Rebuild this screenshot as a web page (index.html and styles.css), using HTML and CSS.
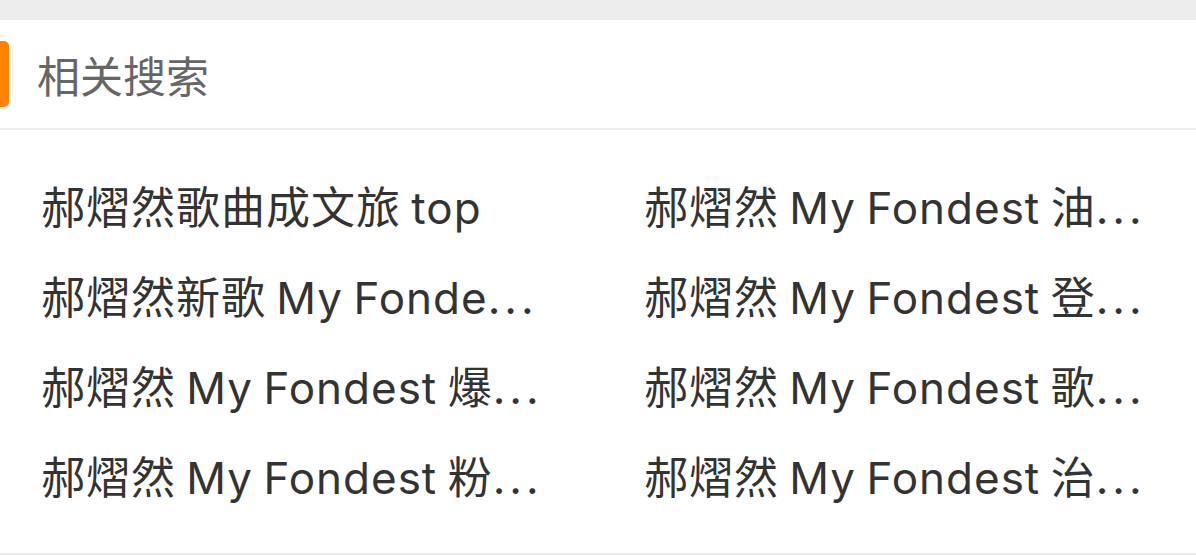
FILE: index.html
```html
<!DOCTYPE html>
<html lang="zh-CN">
<head>
  <meta charset="UTF-8">
  <meta name="viewport" content="width=device-width, initial-scale=1">
  <title>相关搜索</title>
  <link rel="stylesheet" href="styles.css">
</head>
<body>

<!-- 相关搜索 -->
<div class="card">
  <div class="card-head">
    <span class="mark"></span>
    <h2>相关搜索</h2>
  </div>

  <ul class="related">
    <li><a href="#">郝熠然歌曲成文旅 top</a></li>
    <li><a href="#">郝熠然 My Fondest 油<span class="more">...</span></a></li>
    <li><a href="#">郝熠然新歌 My Fonde<span class="more">...</span></a></li>
    <li><a href="#">郝熠然 My Fondest 登<span class="more">...</span></a></li>
    <li><a href="#">郝熠然 My Fondest 爆<span class="more">...</span></a></li>
    <li><a href="#">郝熠然 My Fondest 歌<span class="more">...</span></a></li>
    <li><a href="#">郝熠然 My Fondest 粉<span class="more">...</span></a></li>
    <li><a href="#">郝熠然 My Fondest 治<span class="more">...</span></a></li>
  </ul>
</div>

</body>
</html>
```

FILE: styles.css
```css
body {
  margin: 0;
  padding: 20px 0 6px;
  background-color: #ededed;
  font-family: Inter, "Noto Sans CJK SC", sans-serif;
  color: #333;
}

.card {
  background-color: #fff;
}

.card-head {
  display: flex;
  align-items: center;
  height: 108px;
  border-bottom: 2px solid #ececec;
}

.mark {
  width: 9px;
  height: 66px;
  background-color: #ff8200;
  border-radius: 0 5px 5px 0;
}

.card-head h2 {
  margin: 0 0 0 28px;
  font-size: 43px;
  font-weight: normal;
  color: #666;
}

/* 两列关键词 */
.related {
  list-style: none;
  margin: 0;
  padding: 30px 0 33px 41px;
  display: grid;
  grid-template-columns: 603px 1fr;
  grid-auto-rows: 90px;
}

.related li {
  display: flex;
  align-items: center;
}

.related a {
  font-size: 44px;
  letter-spacing: 1px;
  word-spacing: -3px;
  color: #333;
  text-decoration: none;
  white-space: nowrap;
}

.related .more {
  letter-spacing: 4px;
}
```
